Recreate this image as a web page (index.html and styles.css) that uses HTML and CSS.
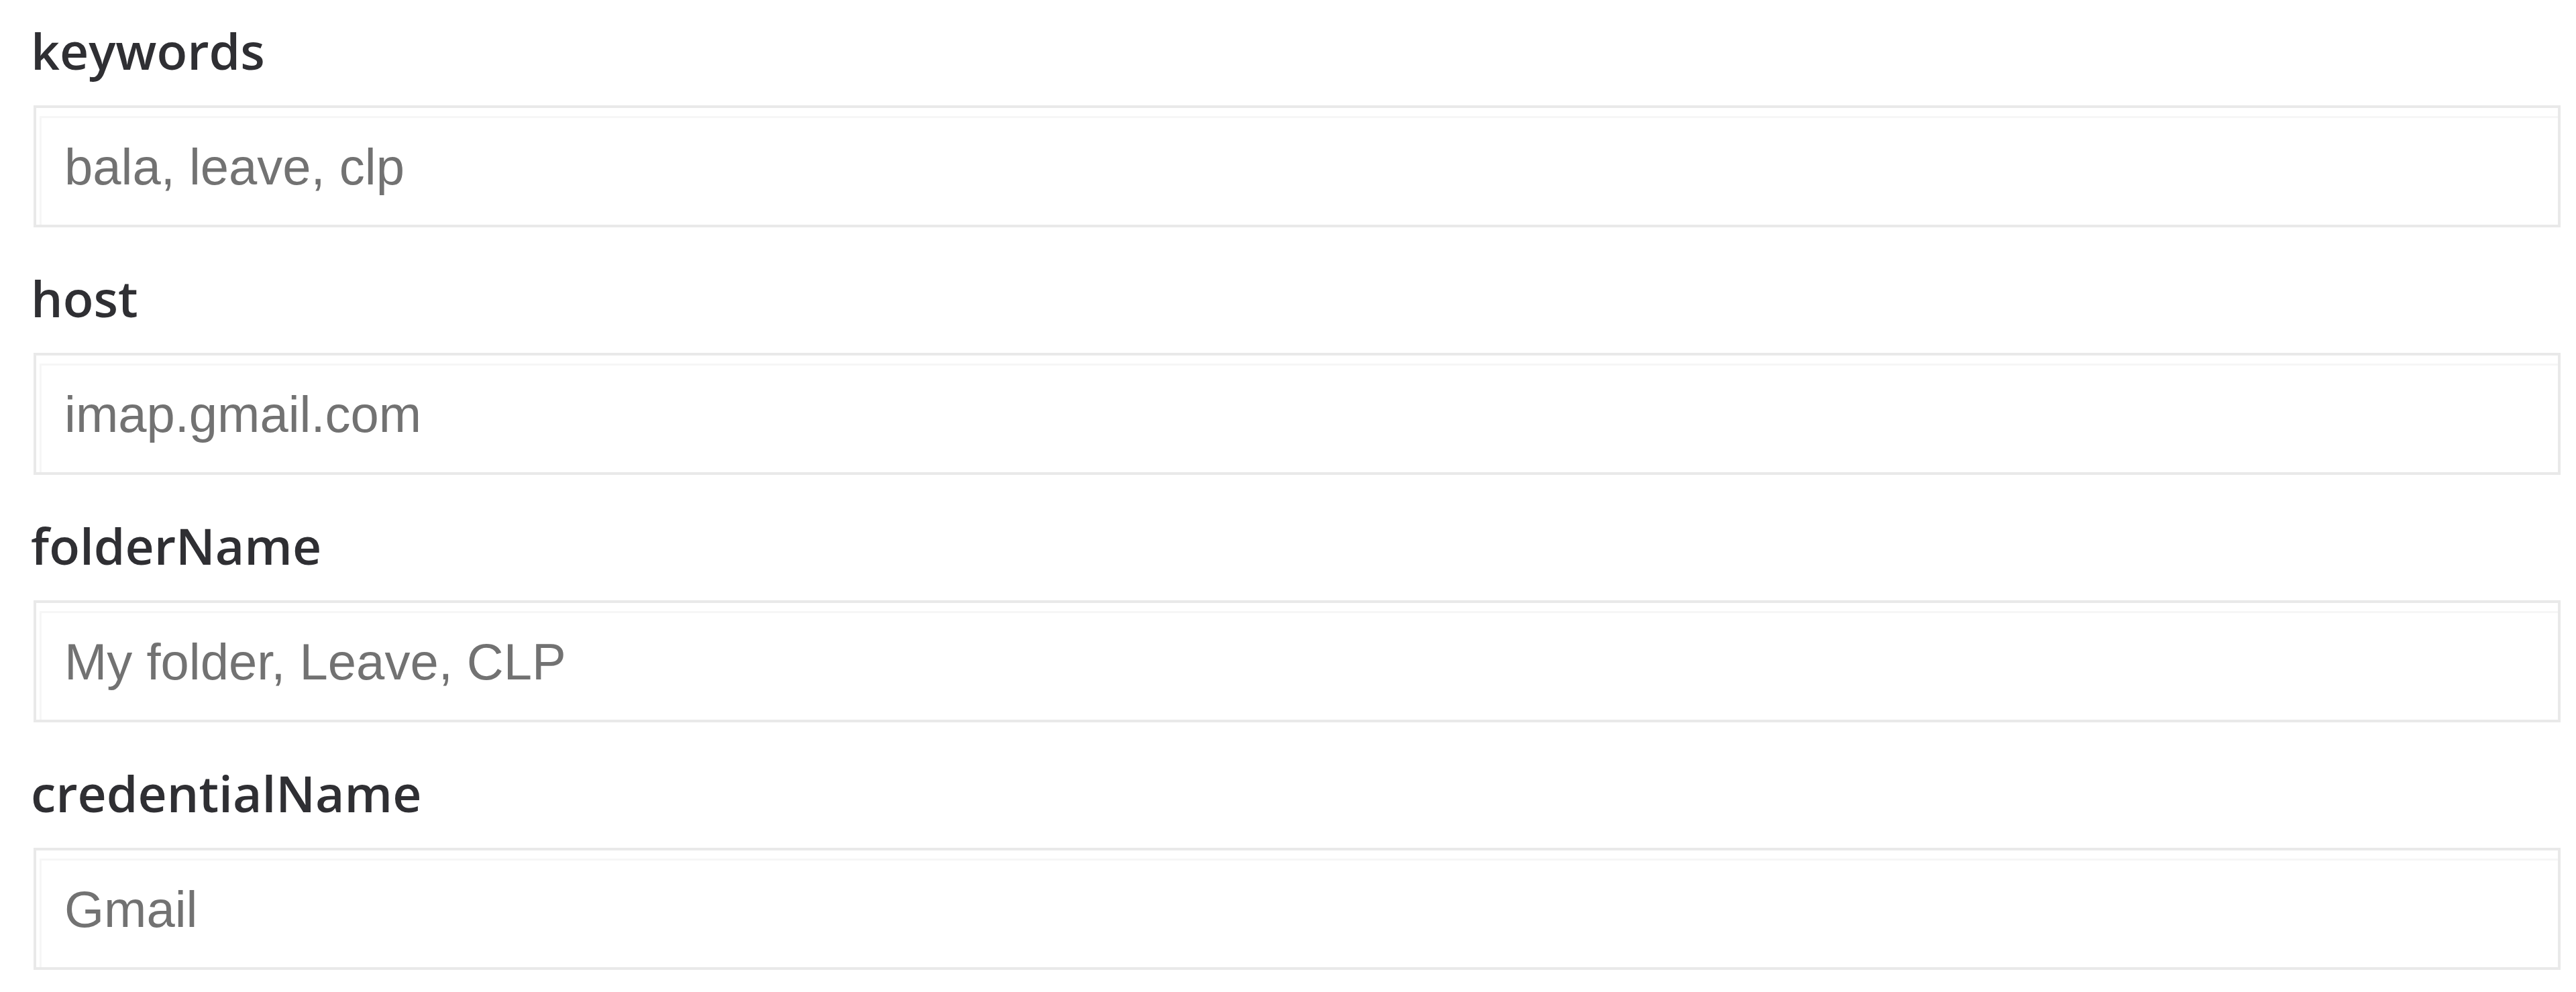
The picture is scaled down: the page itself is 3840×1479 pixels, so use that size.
FILE: index.html
```html
<!DOCTYPE html>
<html lang="en">
<head>
<meta charset="utf-8">
<title>Email settings</title>
<link rel="stylesheet" href="styles.css">
</head>
<body>
<form class="form">
  <div class="field">
    <label class="field-label" for="keywords">keywords</label>
    <input class="field-input" id="keywords" type="text" placeholder="bala, leave, clp">
  </div>
  <div class="field">
    <label class="field-label" for="host">host</label>
    <input class="field-input" id="host" type="text" placeholder="imap.gmail.com">
  </div>
  <div class="field">
    <label class="field-label" for="folderName">folderName</label>
    <input class="field-input" id="folderName" type="text" placeholder="My folder, Leave, CLP">
  </div>
  <div class="field">
    <label class="field-label" for="credentialName">credentialName</label>
    <input class="field-input" id="credentialName" type="text" placeholder="Gmail">
  </div>
</form>
</body>
</html>
```
FILE: styles.css
```css
html, body {
  margin: 0;
  padding: 0;
  background: #ffffff;
}

.form {
  display: flex;
  flex-direction: column;
  gap: 60px;
  padding: 30px 23px 0 50px;
}

.field {
  display: flex;
  flex-direction: column;
}

.field-label {
  display: block;
  margin-left: -4px;
  font-family: "Open Sans", "Noto Sans", sans-serif;
  font-size: 75px;
  font-weight: 550;
  line-height: 90px;
  height: 90px;
  color: #2f2f33;
}

.field-input {
  display: block;
  box-sizing: border-box;
  margin: 37px 0 0 0;
  width: 100%;
  height: 182px;
  padding: 0 42px;
  border: 4px solid #e9e9e9;
  border-radius: 0;
  background: #ffffff;
  box-shadow: inset 5px 12px 0 #ffffff, inset 8px 15px 0 #f6f6f6;
  font-family: "Liberation Sans", Arial, sans-serif;
  font-size: 76px;
  color: #737373;
  outline: none;
}

.field-input::placeholder {
  color: #727272;
  opacity: 1;
}
```
